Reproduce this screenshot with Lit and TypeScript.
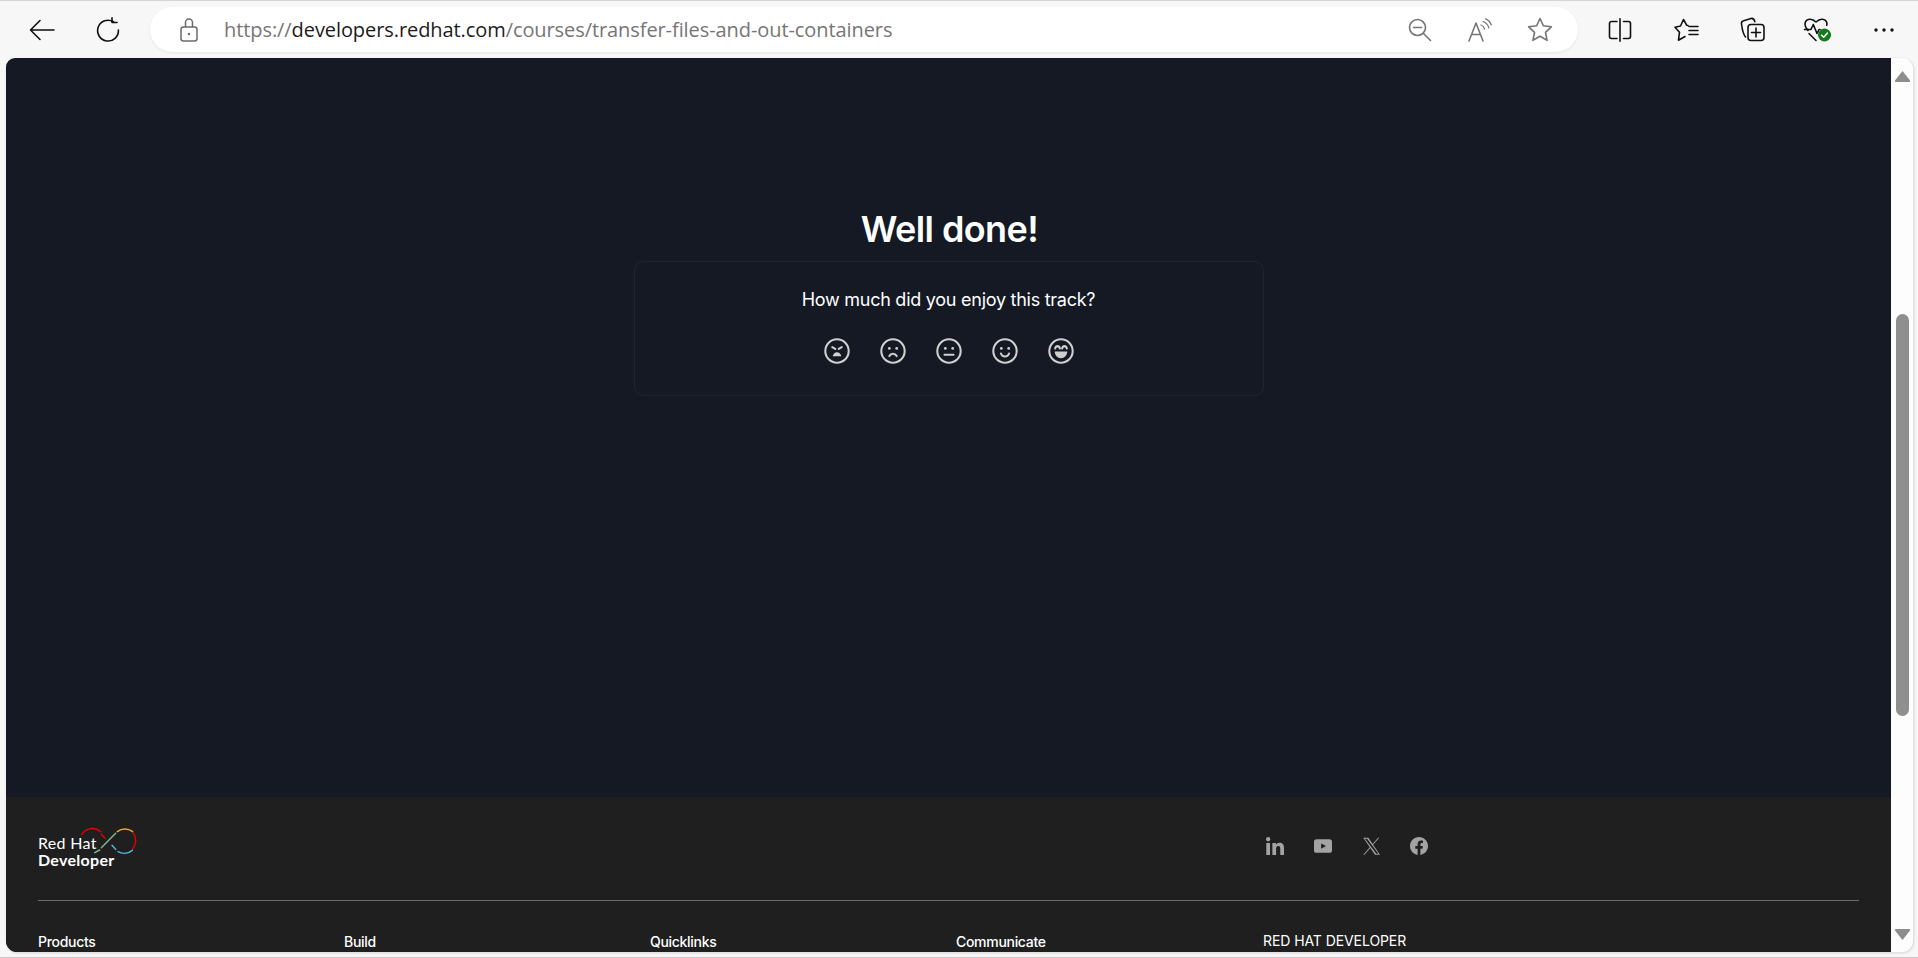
import { LitElement, css, html, svg } from "lit";
import { customElement } from "lit/decorators.js";

const moods = [
  svg`<path d="M7.600 8.400l2.800 1.700M16.400 8.400l-2.800 1.700"/><path class="fill" d="M8 16.800c.6-2.400 2.200-3.600 4-3.600s3.400 1.200 4 3.600z"/>`,
  svg`<circle class="fill" cx="8.600" cy="9.600" r="1.300"/><circle class="fill" cx="15.400" cy="9.600" r="1.300"/><path d="M8.600 16.700c.8-1.500 2-2.200 3.400-2.200s2.600.7 3.400 2.200"/>`,
  svg`<circle class="fill" cx="8.600" cy="9.600" r="1.300"/><circle class="fill" cx="15.400" cy="9.600" r="1.300"/><path d="M7.800 15.400h8.400"/>`,
  svg`<circle class="fill" cx="8.600" cy="9.600" r="1.300"/><circle class="fill" cx="15.400" cy="9.600" r="1.300"/><path d="M8.200 14.300c.7 1.900 2.100 2.800 3.800 2.800s3.100-.9 3.800-2.800"/>`,
  svg`<path d="M6.600 9.800c.4-1.600 1.200-2.300 2.200-2.300s1.800.7 2.200 2.300M13 9.800c.4-1.600 1.200-2.300 2.200-2.300s1.800.7 2.200 2.300"/><path class="fill" d="M6.200 12.400h11.600c0 3.400-2.600 6.200-5.800 6.200s-5.800-2.800-5.800-6.200z"/>`,
];

const footerColumns = ["Products", "Build", "Quicklinks", "Communicate"];

@customElement("app-root")
export class AppRoot extends LitElement {
  static styles = css`
    :host {
      display: flex;
      flex-direction: column;
      height: 958px;
      overflow: hidden;
      background: #f7f7f7;
      border-top: 1px solid #d4d4d4;
      border-bottom: 1px solid #c9c5c6;
      box-sizing: border-box;
      font-family: Inter, "Liberation Sans", sans-serif;
    }

    .toolbar {
      display: flex;
      align-items: flex-start;
      height: 57px;
      padding: 6px 0 0 9px;
      box-sizing: border-box;
    }

    .btn {
      flex: none;
      width: 66px;
      height: 45px;
      display: flex;
      align-items: center;
      justify-content: center;
      color: #111;
    }

    .btn svg,
    .pill-btn svg {
      fill: none;
      stroke: currentColor;
      stroke-width: 1.600;
      stroke-linejoin: round;
      stroke-linecap: round;
    }

    .pill {
      flex: none;
      width: 1428px;
      height: 45px;
      margin: 0 9px 0 9px;
      display: flex;
      align-items: center;
      padding-right: 8px;
      box-sizing: border-box;
      background: #fff;
      border-radius: 23px;
      box-shadow: 0 1px 3px rgba(0, 0, 0, 0.08);
    }

    .lock {
      flex: none;
      width: 20px;
      height: 24px;
      margin: 0 25px 0 29px;
      color: #6b6b6b;
    }

    .url {
      flex: 1;
      font: 20px "Open Sans", "Noto Sans", sans-serif;
      letter-spacing: -0.08px;
      color: #767676;
      white-space: nowrap;
    }

    .url b {
      font-weight: 400;
      color: #1c1c1c;
    }

    .pill-btn {
      flex: none;
      width: 60px;
      display: flex;
      justify-content: center;
      color: #757575;
    }

    .window {
      flex: none;
      display: flex;
      height: 894px;
      margin: 0 5px 0 6px;
      background: #fdfdfd;
      border-radius: 9px 11px 11px 11px;
      box-shadow: 1px 1px 3px rgba(0, 0, 0, 0.14);
      overflow: hidden;
    }

    .page {
      flex: 1;
      min-width: 0;
      display: flex;
      flex-direction: column;
      background: #141924;
    }

    .content {
      flex: 1;
      display: flex;
      flex-direction: column;
      align-items: center;
      padding: 149px 0 0 2px;
    }

    h1 {
      margin: 0;
      font-size: 36px;
      line-height: 44px;
      font-weight: 600;
      letter-spacing: -0.6px;
      color: #fff;
    }

    .card {
      width: 630px;
      height: 135px;
      margin: 10px 2px 0 0;
      box-sizing: border-box;
      padding-top: 26px;
      border: 1px solid #1f2530;
      border-radius: 9px;
      text-align: center;
    }

    .question {
      font-size: 18px;
      line-height: 24px;
      letter-spacing: -0.26px;
      color: #fff;
    }

    .moods {
      display: flex;
      justify-content: center;
      gap: 30px;
      margin-top: 26px;
    }

    .mood {
      width: 26px;
      height: 26px;
      fill: none;
      stroke: #cfcfcf;
      stroke-width: 1.900;
      stroke-linecap: round;
    }

    .mood .fill {
      fill: #cfcfcf;
      stroke: none;
    }

    footer {
      flex: none;
      height: 155px;
      padding: 0 32px;
      background: #1f1f1f;
      color: #fff;
      overflow: hidden;
    }

    .grid {
      display: grid;
      grid-template-columns: repeat(5, 306px);
    }

    .top {
      height: 103px;
      align-items: start;
      border-bottom: 1px solid #6e6e6e;
    }

    .logo {
      position: relative;
      margin-top: 37px;
      font-size: 16px;
      line-height: 18px;
      font-family: Lato, sans-serif;
      letter-spacing: 0.3px;
      grid-column: 1 / 5;
    }

    .logo span,
    .logo strong {
      display: block;
      height: 17px;
    }

    .logo span {
      font-weight: 400;
    }

    .logo strong {
      font-weight: 700;
    }

    .logo svg {
      position: absolute;
      left: 41px;
      top: -8px;
      fill: none;
      stroke-width: 4.500;
    }

    .social {
      display: flex;
      align-items: center;
      gap: 30px;
      margin: 40px 0 0 4px;
      color: #a3a3a3;
    }

    .social svg {
      width: 18px;
      height: 18px;
      fill: currentColor;
      flex: none;
    }

    .links {
      padding-top: 33px;
      font-size: 14px;
      line-height: 16px;
      font-weight: 500;
      letter-spacing: -0.3px;
    }

    .links .plain {
      font-weight: 400;
      letter-spacing: -0.08px;
      margin: -1px 0 0 1px;
    }

    .scrollbar {
      flex: none;
      width: 22px;
      display: flex;
      flex-direction: column;
      align-items: center;
      padding: 13px 0 12px;
      box-sizing: border-box;
    }

    .scrollbar svg {
      flex: none;
      fill: #8d8d8d;
    }

    .track {
      flex: 1;
      align-self: stretch;
      padding-top: 232px;
    }

    .thumb {
      width: 13px;
      height: 402px;
      margin-left: 5px;
      background: #8f8f8f;
      border-radius: 7px;
    }
  `;

  render() {
    return html`
      <div class="toolbar">
        <div class="btn">
          <svg width="26" height="24" viewBox="0 0 26 24"><path d="M25 12H2M11 2.500L1.500 12l9.500 9.500"/></svg>
        </div>
        <div class="btn">
          <svg width="26" height="26" viewBox="0 0 26 26"><path d="M18.500 4.800A10.400 10.400 0 1 0 23.400 13"/><path d="M17 .8v4.700h5"/></svg>
        </div>
        <div class="pill">
          <svg class="lock" viewBox="0 0 20 24" fill="none" stroke="currentColor" stroke-width="1.500">
            <rect x="2" y="9" width="16" height="14" rx="2.500"/>
            <path d="M6.500 9V4.500a3.500 3.500 0 0 1 7 0V9"/>
            <circle cx="10" cy="16" r="1.200" fill="currentColor" stroke="none"/>
          </svg>
          <div class="url">https://<b>developers.redhat.com</b>/courses/transfer-files-and-out-containers</div>
          <div class="pill-btn">
            <svg width="24" height="24" viewBox="0 0 24 24"><circle cx="9.500" cy="9.500" r="8"/><path d="M5.500 9.500h8M15.500 15.500l7 7"/></svg>
          </div>
          <div class="pill-btn">
            <svg width="24" height="24" viewBox="0 0 24 24"><path d="M1 23L8 5l7 18M3.500 16.500h9"/><path d="M13 7c2 .7 3 2 3.600 4M15 3.500c3 1 5 3.200 5.800 6.300M17.500.8c3 1.200 5 3.500 5.800 6.200" stroke-width="1.300"/></svg>
          </div>
          <div class="pill-btn">
            <svg width="26" height="25" viewBox="0 0 26 25"><path d="M13 1.500l3.400 7.300 8 1-5.900 5.500 1.600 8-7.100-4-7.100 4 1.600-8L1.600 9.800l8-1z"/></svg>
          </div>
        </div>
        <div class="btn">
          <svg width="24" height="24" viewBox="0 0 24 24"><path d="M9 3.500H3.500a2 2 0 0 0-2 2v13a2 2 0 0 0 2 2H9M15.500 3.500h5a2 2 0 0 1 2 2v13a2 2 0 0 1-2 2h-5M12 .8v22.400"/></svg>
        </div>
        <div class="btn">
          <svg width="25" height="24" viewBox="0 0 25 24"><path d="M14 7.500l-1.200-.2L9.500 1.500 6.500 8 1 9.200l4.500 5-1 8 6.500-3.700M15 8.500h9M15 12.500h9M15 16.500h9"/></svg>
        </div>
        <div class="btn">
          <svg width="25" height="25" viewBox="0 0 25 25"><rect x="8" y="7.500" width="16" height="16" rx="3"/><path d="M16 11v9M11.500 15.500h9"/><path d="M5.500 20C3.800 18 2 11 1.500 7c-.2-1.800.5-3 2.200-3.300L11 1.500c2-.4 3.200.5 3.800 3.200"/></svg>
        </div>
        <div class="btn">
          <svg width="30" height="28" viewBox="0 0 30 28">
            <path d="M5 14.500C2 11 1.500 8.500 2.300 6.300 3.500 3 8.500 1.500 13 6c4.500-4.500 9.500-3 10.700.3.300 1 .3 2 0 3"/>
            <path d="M1.500 13.500h6.500l2.300-5 3.700 9 2-4h1M6 17.500l7 7"/>
            <circle cx="21.500" cy="19" r="6.500" fill="#117a1a" stroke="none"/>
            <path d="M18.700 19.200l2 2 3.600-4" stroke="#fff" stroke-width="1.600"/>
          </svg>
        </div>
        <div class="btn">
          <svg width="20" height="4" viewBox="0 0 20 4"><circle cx="2" cy="2" r="1.700" fill="currentColor" stroke="none"/><circle cx="10" cy="2" r="1.700" fill="currentColor" stroke="none"/><circle cx="18" cy="2" r="1.700" fill="currentColor" stroke="none"/></svg>
        </div>
      </div>

      <div class="window">
        <div class="page">
          <div class="content">
            <h1>Well done!</h1>
            <div class="card">
              <div class="question">How much did you enjoy this track?</div>
              <div class="moods">
                ${moods.map(
                  (face) => html`<svg class="mood" viewBox="0 0 24 24"><circle cx="12" cy="12" r="10.800"/>${face}</svg>`
                )}
              </div>
            </div>
          </div>

          <footer>
            <div class="grid top">
              <div class="logo">
                <span>Red Hat</span>
                <strong>Developer</strong>
                <svg width="60" height="30" viewBox="235 110 180 90" stroke-linecap="round">
                  <path stroke="#e00000" d="M243 135A38 38 0 0 1 300 127M302 135L313 147M398 131A38 38 0 0 1 396 178"/>
                  <path stroke="#7fb58f" d="M302 175L345 132M282 190L297 182"/>
                  <path stroke="#4fb3d9" d="M334 168L345 180M352 187A38 38 0 0 0 395 183"/>
                  <path stroke="#f5a33b" d="M350 127A38 38 0 0 1 396 127"/>
                </svg>
              </div>
              <div class="social">
                <svg viewBox="0 0 448 448"><path d="M100.280 448H7.400V148.900h92.880zM53.790 108.100C24.090 108.100 0 83.500 0 53.800a53.790 53.790 0 0 1 107.580 0c0 29.700-24.100 54.300-53.790 54.300zM447.900 448h-92.680V302.400c0-34.700-.7-79.200-48.290-79.200-48.290 0-55.690 37.700-55.690 76.700V448h-92.780V148.900h89.080v40.800h1.300c12.400-23.500 42.690-48.300 87.880-48.300 94 0 111.280 61.900 111.280 142.300V448z"/></svg>
                <svg viewBox="0 0 24 24"><path fill-rule="evenodd" d="M3.500 3h17A3.500 3.500 0 0 1 24 6.500v11a3.500 3.500 0 0 1-3.500 3.500h-17A3.500 3.500 0 0 1 0 17.500v-11A3.500 3.500 0 0 1 3.500 3zM9.500 8.500v7l6.500-3.500z"/></svg>
                <svg viewBox="0 0 24 24"><path d="M14.800 10.400L23 1h-1.600l-7.200 8.200L8.500 1H1.700l8.700 12.500L1.700 23.500h1.600l7.800-9 6.200 9H24zM3.900 2.200h2.900L21.900 22.400H19z"/></svg>
                <svg viewBox="0 0 24 24"><path d="M24 12.073c0-6.627-5.373-12-12-12s-12 5.373-12 12c0 5.990 4.388 10.954 10.125 11.854v-8.385H7.078v-3.470h3.047V9.430c0-3.007 1.792-4.669 4.533-4.669 1.312 0 2.686.235 2.686.235v2.953H15.830c-1.491 0-1.956.925-1.956 1.874v2.250h3.328l-.532 3.470h-2.796v8.385C19.612 23.027 24 18.062 24 12.073z"/></svg>
              </div>
            </div>
            <div class="grid links">
              ${footerColumns.map((label) => html`<div>${label}</div>`)}
              <div class="plain">RED HAT DEVELOPER</div>
            </div>
          </footer>
        </div>

        <div class="scrollbar">
          <svg width="15" height="11" viewBox="0 0 15 11"><path d="M7.500 0L15 9.500q.3 1.500-1 1.500H1q-1.300 0-1-1.500z"/></svg>
          <div class="track"><div class="thumb"></div></div>
          <svg width="15" height="11" viewBox="0 0 15 11"><path d="M7.500 11L15 1.500Q15.300 0 14 0H1Q-.3 0 0 1.500z"/></svg>
        </div>
      </div>
    `;
  }
}
